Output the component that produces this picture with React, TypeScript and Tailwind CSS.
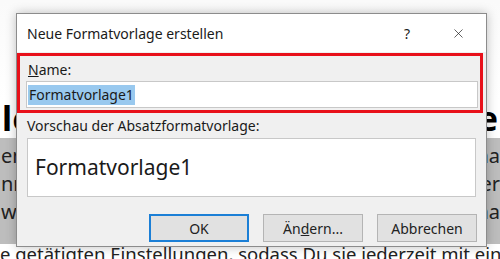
import { X } from "lucide-react";

function DialogButton({ label, primary }: { label: React.ReactNode; primary?: boolean }) {
  return (
    <button
      className={
        "w-[100px] h-[28px] bg-[#e1e1e1] text-[14px] text-[#222] " +
        (primary ? "border-2 border-[#1b7fd6]" : "border border-[#b4b4b4]")
      }
    >
      {label}
    </button>
  );
}

export default function App() {
  return (
    <div className="relative w-[500px] h-[259px] overflow-hidden bg-white font-['Noto_Sans',sans-serif] text-[#1a1a1a]">
      {/* page behind the dialog */}
      <div className="flex flex-col">
        <div className="h-[100px] bg-gradient-to-b from-[#fafafa] to-white" />
        <div className="flex justify-between px-[2px] h-[35px] items-center text-[34px] font-bold leading-none text-black">
          <span>le</span>
          <span>le</span>
        </div>
        <div className="h-[3px]" />
        <div className="flex flex-col bg-[#bdbdbd] pt-[4px] h-[106px] text-[20px] leading-[28px] text-[#222]">
          <div className="flex justify-between pl-[1px]">
            <span>en</span>
            <span>na</span>
          </div>
          <div className="flex justify-between pl-[1px]">
            <span>nr</span>
            <span>er</span>
          </div>
          <div className="flex justify-between pl-[1px]">
            <span>wo</span>
            <span>na</span>
          </div>
        </div>
        <div className="whitespace-nowrap text-[18.5px] leading-[24px] -mt-[2px] text-[#222]">
          e getätigten Einstellungen, sodass Du sie jederzeit mit eine
        </div>
      </div>

      {/* dialog */}
      <div className="absolute left-[16px] top-[13px] w-[471px] h-[234px] flex flex-col border border-[#8c8c8c] bg-[#f0f0f0] shadow-[0_0_10px_rgba(0,0,0,0.25)]">
        <div className="h-[38px] bg-white flex items-center pl-[10px] pr-[20px] text-[14px]">
          <span className="flex-1">Neue Formatvorlage erstellen</span>
          <span className="w-[20px] text-center mr-[34px]">?</span>
          <X size={15} strokeWidth={1.1} />
        </div>
        <div className="mt-[1px] mr-[3px] h-[60px] border-[3px] border-[#e8101a] flex flex-col pl-[6px] pr-[2px]">
          <div className="text-[14px] leading-[20px] mt-[4px] pl-[2px]">
            <span className="underline">N</span>ame:
          </div>
          <div className="mt-[1px] h-[27px] bg-white border border-[#c8c8c8] flex items-center px-[1px] text-[14px]">
            <span className="bg-[#99c9ef] px-[1px] leading-[20px]">Formatvorlage1</span>
          </div>
        </div>
        <div className="px-[10px] text-[14px] leading-[20px] mt-[3px]">Vorschau der Absatzformatvorlage:</div>
        <div className="mx-[10px] mt-[2px] h-[59px] bg-white border border-[#c8c8c8] flex items-center px-[7px] text-[21px]">
          Formatvorlage1
        </div>
        <div className="flex justify-end gap-[14px] pr-[9px] mt-[17px]">
          <DialogButton label="OK" primary />
          <DialogButton
            label={
              <>
                Än<span className="underline">d</span>ern...
              </>
            }
          />
          <DialogButton label="Abbrechen" />
        </div>
      </div>
    </div>
  );
}
